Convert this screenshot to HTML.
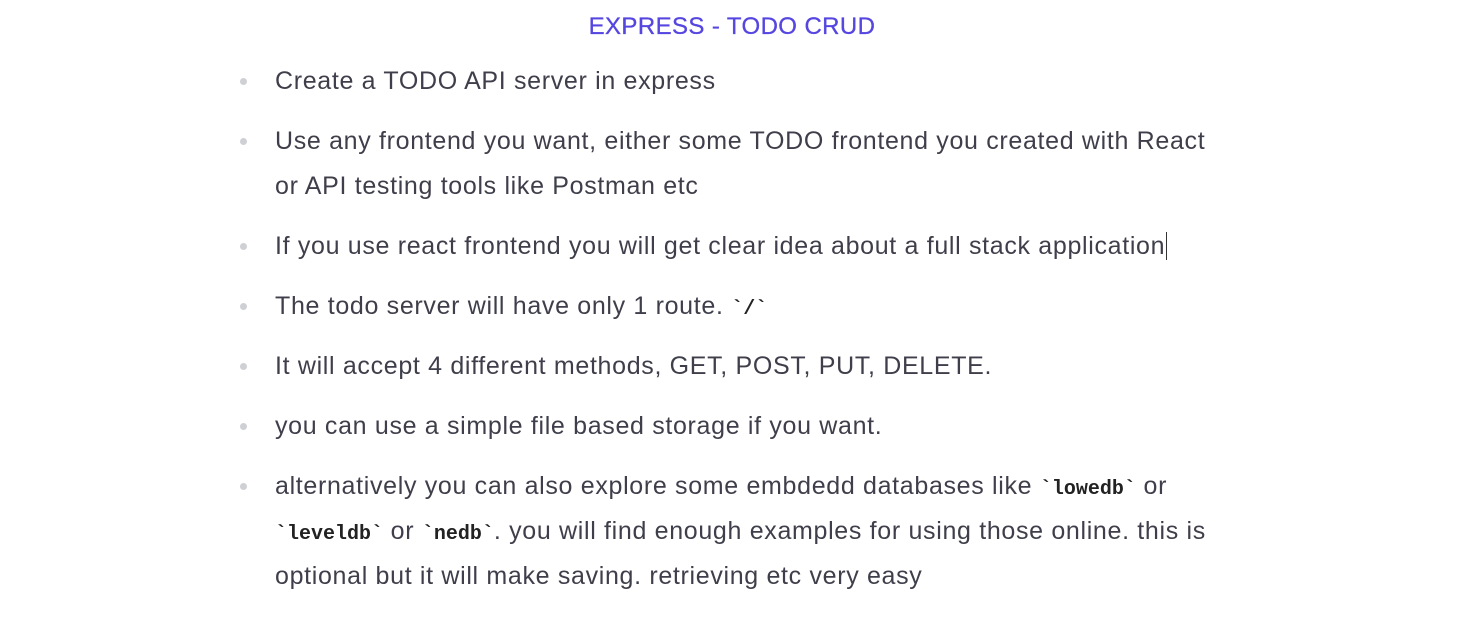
<!DOCTYPE html>
<html><head><meta charset="utf-8"><style>
body{margin:0;width:1467px;height:618px;background:#fff;overflow:hidden;font-family:"Liberation Sans",Arial,sans-serif;color:#3f3f4b;position:relative}
.t{position:absolute;left:0;width:1464px;text-align:center;top:12px;font-size:24px;line-height:30px;color:#5646e0;letter-spacing:0.4px;-webkit-text-stroke:0.3px #5646e0}
.l{position:absolute;left:275px;font-size:25px;line-height:45px;white-space:nowrap;letter-spacing:0.67px}
.b{position:absolute;left:240px;width:7px;height:7px;border-radius:50%;background:#cfd0d4}
code{font-family:"Liberation Mono","DejaVu Sans Mono",monospace;font-weight:bold;font-size:20px;color:#222;letter-spacing:0}
</style></head><body>
<div class="t">EXPRESS - TODO CRUD</div>
<div class="b" style="top:78px"></div><div class="l" style="top:59px">Create a TODO API server in express</div>
<div class="b" style="top:138px"></div><div class="l" style="top:119px">Use any frontend you want, either some TODO frontend you created with React</div>
<div class="l" style="top:164px">or API testing tools like Postman etc</div>
<div class="b" style="top:243px"></div><div class="l" style="top:224px">If you use react frontend you will get clear idea about a full stack application<span style="border-left:1px solid #333;margin-left:1px"></span></div>
<div class="b" style="top:303px"></div><div class="l" style="top:284px">The todo server will have only 1 route. <code>`/`</code></div>
<div class="b" style="top:363px"></div><div class="l" style="top:344px">It will accept 4 different methods, GET, POST, PUT, DELETE.</div>
<div class="b" style="top:423px"></div><div class="l" style="top:404px">you can use a simple file based storage if you want.</div>
<div class="b" style="top:483px"></div><div class="l" style="top:464px">alternatively you can also explore some embdedd databases like <code>`lowedb`</code> or</div>
<div class="l" style="top:509px"><code>`leveldb`</code> or <code>`nedb`</code>. you will find enough examples for using those online. this is</div>
<div class="l" style="top:554px">optional but it will make saving. retrieving etc very easy</div>
</body></html>
